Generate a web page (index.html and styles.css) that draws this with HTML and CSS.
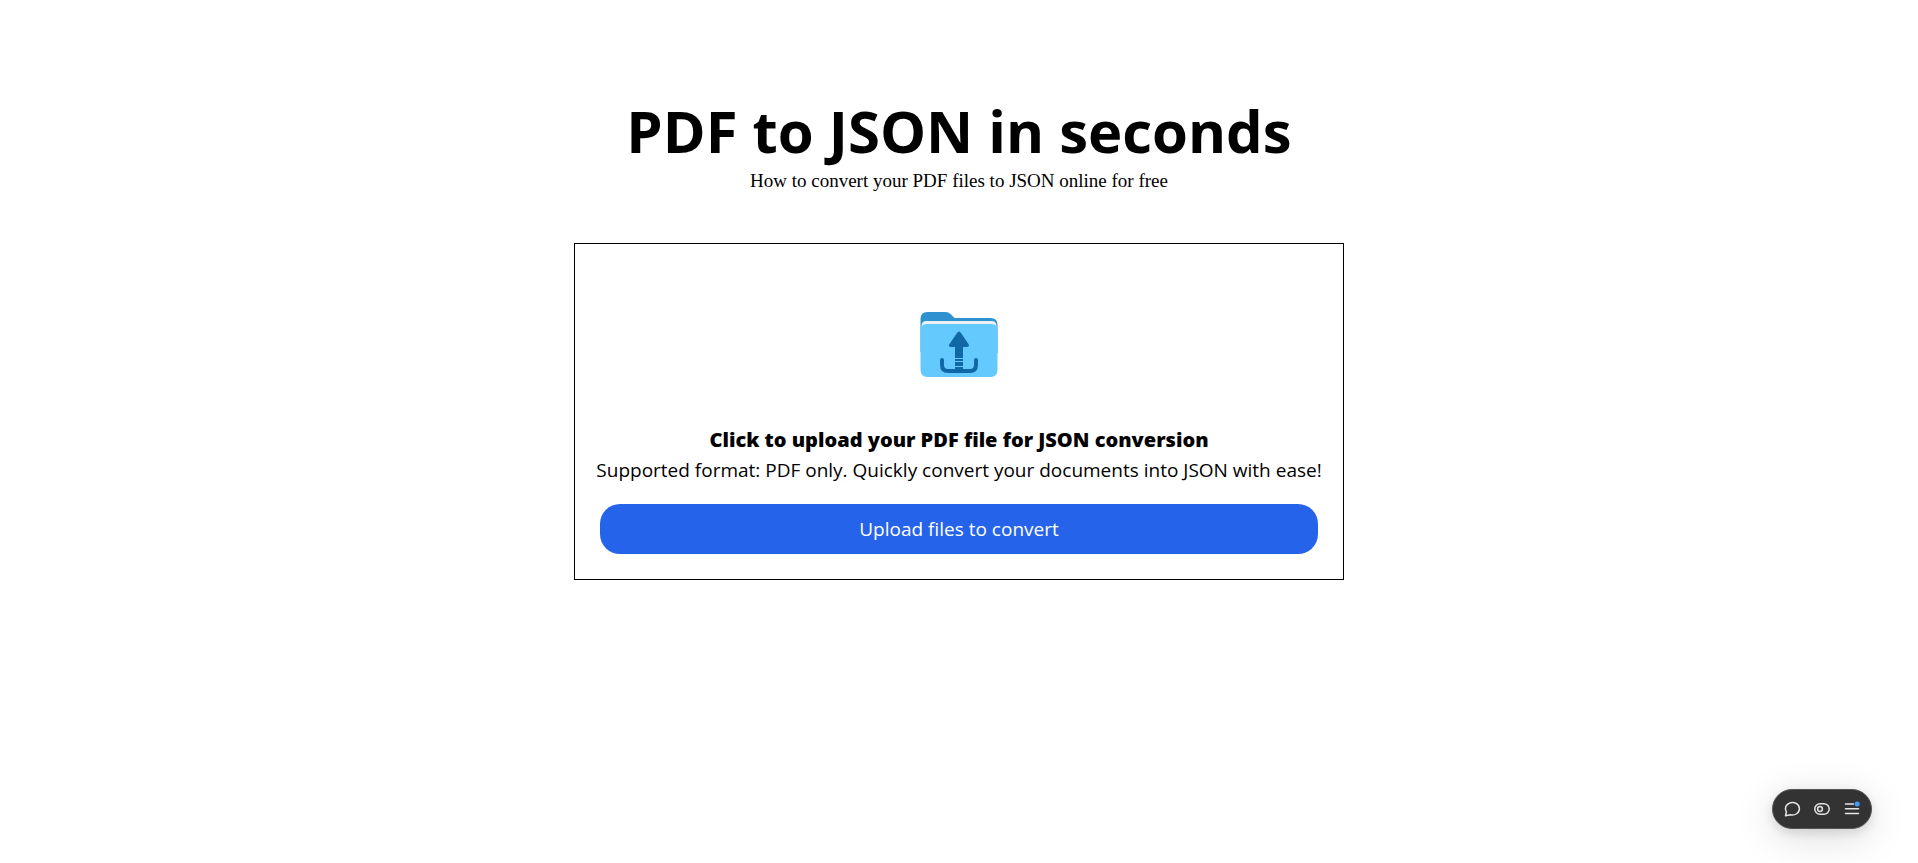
FILE: index.html
```html
<!DOCTYPE html>
<html lang="en">
<head>
<meta charset="utf-8">
<title>PDF to JSON in seconds</title>
<meta name="viewport" content="width=device-width, initial-scale=1">
<link rel="stylesheet" href="styles.css">
</head>
<body>
<main class="page">
  <header class="intro">
    <h1 class="title">PDF to JSON in seconds</h1>
    <p class="subtitle">How to convert your PDF files to JSON online for free</p>
  </header>
  <section class="card">
    <svg class="folder" viewBox="0 0 120 120" aria-hidden="true">
      <path fill="#2f91cf" d="M21.500 66V33q0-7 7-7h18q3 0 5 2l4 4h36q7 0 7 7v28z"/>
      <path fill="#e9f1f5" d="M22.500 52V40q0-5 5-5h65q5 0 5 5v13z"/>
      <path fill="#64cafe" d="M21.500 45q0-7 6-7h65q6 0 6 7v38q0 8-7 8h-63q-7 0-7-8z"/>
      <path fill="#1068a7" d="M58 47q2-3 4 0l7.500 11q1.500 3-2 3H64v11h-8V61h-3.500q-4 0-2-3z"/>
      <path fill="#1068a7" d="M56 73h8v2h-8zM56 76h8v4h-8zM56 81h8v2h-8z"/>
      <path fill="none" stroke="#1068a7" stroke-width="4" stroke-linecap="round" d="M43 74v5q0 6 6 6h22q6 0 6-6v-5"/>
    </svg>
    <h2 class="prompt">Click to upload your PDF file for JSON conversion</h2>
    <p class="formats">Supported format: PDF only. Quickly convert your documents into JSON with ease!</p>
    <button class="upload" type="button">Upload files to convert</button>
  </section>
</main>
<div class="toolbar" role="toolbar" aria-label="Page tools">
  <button class="tool" type="button" aria-label="Comments">
    <svg viewBox="0 0 18 18" aria-hidden="true"><path d="M2.500 15.800 3.400 12A7 6.300 0 1 1 7.500 14.800z"/></svg>
  </button>
  <button class="tool" type="button" aria-label="Toggle">
    <svg viewBox="0 0 18 18" aria-hidden="true"><rect x="1.800" y="3.700" width="14.400" height="10.600" rx="5.300"/><circle cx="7" cy="9" r="2.400"/></svg>
  </button>
  <button class="tool" type="button" aria-label="Menu">
    <svg viewBox="0 0 18 18" aria-hidden="true"><path d="M2.500 4h8M2.500 8.800h13M2.500 13.500h13"/><circle class="dot" cx="14.200" cy="4" r="2.500"/></svg>
  </button>
</div>
</body>
</html>
```

FILE: styles.css
```css
* {
  box-sizing: border-box;
}

body {
  margin: 0;
  background: #fff;
  color: #000;
  font-family: "Segoe UI", "Open Sans", "Noto Sans", sans-serif;
}

.page {
  display: flex;
  flex-direction: column;
  align-items: center;
  gap: 50px;
  padding: 100px 20px;
}

.intro {
  text-align: center;
}

.title {
  margin: 0 0 8px;
  font-size: 58px;
  font-weight: 700;
  line-height: 61px;
}

.subtitle {
  margin: 0;
  font-family: Georgia, "Liberation Serif", serif;
  font-size: 19px;
  line-height: 24px;
}

.card {
  display: flex;
  flex-direction: column;
  align-items: center;
  width: 770px;
  max-width: 100%;
  padding: 20px 20px 25px;
  border: 1px solid #000;
  text-align: center;
}

.folder {
  width: 120px;
  height: 120px;
  margin: 22px 0 19px;
}

.prompt {
  margin: 0;
  font-size: 20px;
  font-weight: 800;
  line-height: 30px;
}

.formats {
  margin: 0;
  font-size: 19px;
  line-height: 30px;
}

.upload {
  align-self: stretch;
  height: 50px;
  margin: 19px 5px 0;
  border: 0;
  border-radius: 20px;
  background: #2563eb;
  color: #fff;
  font-family: inherit;
  font-size: 19px;
  cursor: pointer;
}

.toolbar {
  position: fixed;
  right: 46px;
  bottom: 34px;
  display: flex;
  align-items: center;
  justify-content: center;
  gap: 12px;
  width: 100px;
  height: 40px;
  border-radius: 20px;
  border: 1px solid #555;
  background: #333;
  box-shadow: 0 4px 12px rgba(0, 0, 0, 0.12), 0 8px 40px rgba(0, 0, 0, 0.14);
}

.tool {
  display: flex;
  padding: 0;
  border: 0;
  background: none;
}

.tool svg {
  width: 18px;
  height: 18px;
  fill: none;
  stroke: #e4e4e4;
  stroke-width: 1.5;
  stroke-linecap: round;
  stroke-linejoin: round;
}

.tool .dot {
  fill: #3b9eff;
  stroke: none;
}
```
